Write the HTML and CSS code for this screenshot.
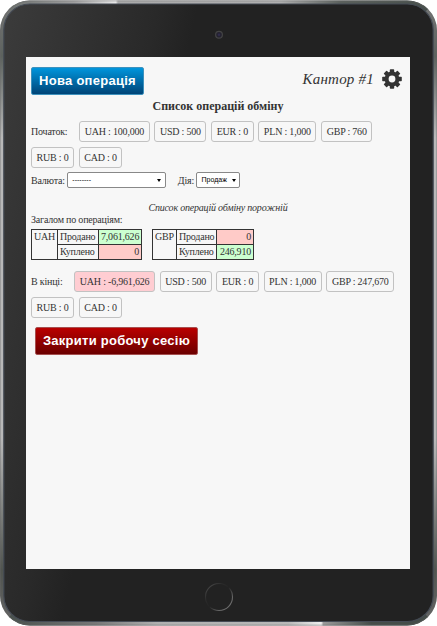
FILE: index.html
```html
<!DOCTYPE html>
<html lang="uk">
<head>
<meta charset="utf-8">
<title>Кантор</title>
<link rel="stylesheet" href="styles.css">
</head>
<body>
<div class="tablet">
  <svg class="frame" viewBox="0 0 437 626" aria-hidden="true">
    <defs>
      <linearGradient id="side" x1="0" y1="0" x2="0" y2="1">
        <stop offset="0" stop-color="#777"/><stop offset=".09" stop-color="#5c625e"/><stop offset=".22" stop-color="#b8b8b8"/><stop offset=".7" stop-color="#b8b8b8"/><stop offset=".91" stop-color="#50544f"/><stop offset="1" stop-color="#666"/>
      </linearGradient>
      <linearGradient id="top" x1="0" x2="1">
        <stop offset="0" stop-color="#666b68"/><stop offset=".17" stop-color="#a0a0a0"/><stop offset=".265" stop-color="#e8e8e8"/><stop offset=".27" stop-color="#aaa"/><stop offset=".64" stop-color="#b0b0b0"/><stop offset=".78" stop-color="#5a605c"/><stop offset="1" stop-color="#454d49"/>
      </linearGradient>
      <linearGradient id="bottom" x1="0" x2="1">
        <stop offset="0" stop-color="#454d49"/><stop offset=".22" stop-color="#777"/><stop offset=".36" stop-color="#b0b0b0"/><stop offset=".66" stop-color="#b8b8b8"/><stop offset=".735" stop-color="#eee"/><stop offset=".74" stop-color="#999"/><stop offset=".85" stop-color="#454d49"/><stop offset="1" stop-color="#454d49"/>
      </linearGradient>
      <linearGradient id="face" gradientUnits="userSpaceOnUse" x1="0" y1="0" x2="190" y2="42">
        <stop offset="0" stop-color="#3c3c3c"/><stop offset=".8" stop-color="#292929"/><stop offset="1" stop-color="#222"/>
      </linearGradient>
      <linearGradient id="homeRing" x1="0" y1="0" x2="1" y2="1">
        <stop offset="0" stop-color="#555"/><stop offset=".3" stop-color="#2c2c2c"/><stop offset=".5" stop-color="#232323"/><stop offset=".75" stop-color="#666"/><stop offset="1" stop-color="#777"/>
      </linearGradient>
      <clipPath id="shell"><rect x="0" y="0.5" width="437" height="625" rx="30"/></clipPath>
    </defs>
    <g clip-path="url(#shell)">
      <rect width="437" height="626" fill="url(#side)"/>
      <path d="M0 0H437L407 30H30Z" fill="url(#top)"/>
      <path d="M0 626H437L407 596H30Z" fill="url(#bottom)"/>
      <rect x=".5" y="1" width="436" height="624" rx="29.5" fill="none" stroke="#666" stroke-opacity=".35"/>
    </g>
    <rect x="3.8" y="4" width="429.4" height="617.5" rx="26" fill="url(#face)" stroke="#454b55" stroke-width="1.2"/>
    <circle cx="219" cy="34.8" r="3.4" fill="#252330" stroke="#444" stroke-width="1.2"/>
    <circle cx="219" cy="34.8" r="1.2" fill="#302c4c"/>
    <circle cx="219" cy="597" r="13.5" fill="none" stroke="url(#homeRing)" stroke-width="1.1"/>
  </svg>
  <main class="screen">
    <header class="header">
      <button class="btn btn-new">Нова операція</button>
      <div class="user">
        <span class="name">Кантор #1</span>
        <svg class="gear" viewBox="0 0 20 20" aria-label="Налаштування">
          <g fill="#333">
            <rect x="7.8" y=".2" width="4.4" height="19.6" rx=".7"/>
            <rect x="7.8" y=".2" width="4.4" height="19.6" rx=".7" transform="rotate(45 10 10)"/>
            <rect x="7.8" y=".2" width="4.4" height="19.6" rx=".7" transform="rotate(90 10 10)"/>
            <rect x="7.8" y=".2" width="4.4" height="19.6" rx=".7" transform="rotate(135 10 10)"/>
            <circle cx="10" cy="10" r="7.4"/>
          </g>
          <circle cx="10" cy="10" r="3.4" fill="#f7f7f7"/>
        </svg>
      </div>
    </header>
    <h1 class="title">Список операцій обміну</h1>
    <div class="balances">
      <span class="label">Початок:</span>
      <span class="chip">UAH : 100,000</span>
      <span class="chip">USD : 500</span>
      <span class="chip">EUR : 0</span>
      <span class="chip">PLN : 1,000</span>
      <span class="chip">GBP : 760</span>
      <span class="chip">RUB : 0</span>
      <span class="chip">CAD : 0</span>
    </div>
    <div class="filters">
      <span>Валюта:</span>
      <div class="select currency"><span>--------</span><i class="arrow"></i></div>
      <span class="action-label">Дія:</span>
      <div class="select action"><span>Продаж</span><i class="arrow"></i></div>
    </div>
    <p class="empty">Список операцій обміну порожній</p>
    <p class="totals-label">Загалом по операціям:</p>
    <div class="totals">
      <table class="uah">
        <colgroup><col class="code"><col class="kind"><col></colgroup>
        <tr><td rowspan="2">UAH</td><td>Продано</td><td class="num good">7,061,626</td></tr>
        <tr><td>Куплено</td><td class="num bad">0</td></tr>
      </table>
      <table class="gbp">
        <colgroup><col class="code"><col class="kind"><col></colgroup>
        <tr><td rowspan="2">GBP</td><td>Продано</td><td class="num bad">0</td></tr>
        <tr><td>Куплено</td><td class="num good">246,910</td></tr>
      </table>
    </div>
    <div class="balances end">
      <span class="label">В кінці:</span>
      <span class="chip negative">UAH : -6,961,626</span>
      <span class="chip">USD : 500</span>
      <span class="chip">EUR : 0</span>
      <span class="chip">PLN : 1,000</span>
      <span class="chip">GBP : 247,670</span>
      <span class="chip">RUB : 0</span>
      <span class="chip">CAD : 0</span>
    </div>
    <button class="btn btn-close">Закрити робочу сесію</button>
  </main>
</div>
</body>
</html>
```

FILE: styles.css
```css
* { box-sizing: border-box; }
body { margin: 0; background: #fff; overflow: hidden; }
.tablet { position: relative; width: 437px; height: 626px; padding: 57px 27px 57px 26px; }
.frame { position: absolute; inset: 0; width: 437px; height: 626px; }
.screen {
  position: relative;
  width: 384px;
  height: 512px;
  padding: 10px 5px 0;
  background: #f7f7f7;
  color: #333;
  font: 10px/12px "Liberation Serif", serif;
  letter-spacing: -.2px;
}
.header { display: flex; justify-content: space-between; height: 28px; }
.btn {
  display: block;
  height: 28px;
  padding: 0;
  border: 1px solid;
  border-radius: 2px;
  color: #fff;
  font: bold 13px/26px "Liberation Sans", sans-serif;
  letter-spacing: .26px;
  text-align: center;
  white-space: nowrap;
}
.btn-new { width: 113px; border-color: #3d91bd; background: linear-gradient(#0095dc, #004477); }
.btn-close { width: 163px; margin: 9px 0 0 4px; border-color: #a65050; background: linear-gradient(#b90000, #6c0000); }
.user { display: flex; align-items: flex-start; gap: 8px; padding: 2px 3px 0 0; }
.name { font-size: 15px; line-height: 20px; font-style: italic; letter-spacing: .22px; }
.gear { width: 20px; height: 20px; }
.title { height: 14px; margin: 4px 0 0; font-size: 12px; line-height: 14px; text-align: center; letter-spacing: 0; }
.balances { display: flex; flex-wrap: wrap; gap: 5px 4.8px; margin-top: 8px; }
.label { margin-right: 7px; line-height: 21px; }
.chip {
  height: 21px;
  padding: 0 4.5px;
  border: 1px solid #c2c2c2;
  border-radius: 3px;
  line-height: 19px;
  white-space: nowrap;
}
.negative { background: #ffcdd2; }
.filters { display: flex; height: 16px; margin-top: 4px; line-height: 17px; }
.select {
  display: flex;
  align-items: center;
  justify-content: space-between;
  height: 16px;
  padding: 0 4px 0 4.5px;
  border: 1px solid #888;
  border-radius: 2px;
  background: #fff;
  color: #000;
  font: 7px/14px "Liberation Sans", sans-serif;
  letter-spacing: 0;
}
.currency { width: 99px; margin-left: 2px; }
.action-label { margin-left: 12px; }
.action { width: 44px; margin-left: 2px; padding-right: 3px; }
.arrow { border: 2px solid transparent; border-top: 3.5px solid #000; border-bottom: 0; }
.empty { margin: 14px 0 0; text-align: center; font-style: italic; }
.totals-label { margin: 0; }
.totals { display: flex; gap: 10px; margin-top: 3px; }
table { height: 31px; border-collapse: collapse; table-layout: fixed; }
.uah { width: 111px; }
.gbp { width: 102px; }
.uah .code { width: 26px; }
.uah .kind { width: 41px; }
.gbp .code { width: 24px; }
.gbp .kind { width: 40px; }
td { height: 15px; padding: 1px 2px; border: 1px solid #333; line-height: 12px; vertical-align: top; white-space: nowrap; }
.num { text-align: right; }
.good { background: #ccffd0; }
.bad { background: #ffcbc8; }
.end { margin-top: 11px; }
```
